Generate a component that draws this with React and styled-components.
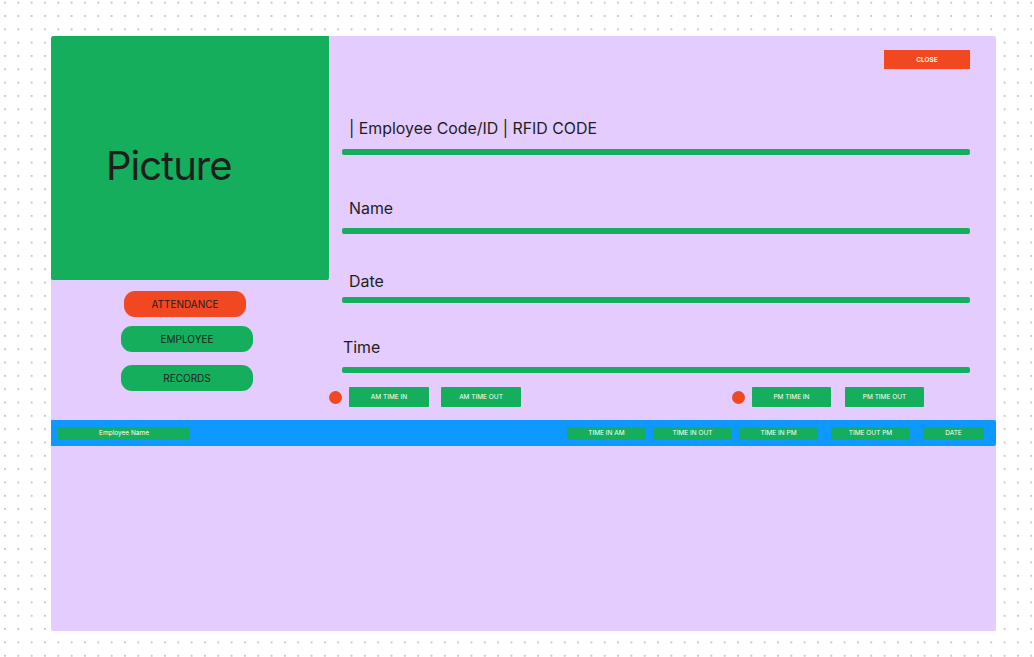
import styled, { createGlobalStyle } from "styled-components";

const GlobalStyle = createGlobalStyle`
    html, body {
        margin: 0;
        padding: 0;
    }
    body {
        width: 1034px;
        height: 657px;
        overflow: hidden;
        background-color: #ffffff;
        background-image: radial-gradient(circle, #c9c9c9 0.8px, transparent 1px);
        background-size: 13.33px 13.33px;
        background-position: -1.7px -4px;
        font-family: 'Inter', 'Liberation Sans', sans-serif;
    }
`

const GREEN = "#14ae5c";
const RED = "#f24822";
const BLUE = "#0d99ff";

const columns = [
    { label: "TIME IN AM", width: 79 },
    { label: "TIME IN OUT", width: 79 },
    { label: "TIME IN PM", width: 79, gapAfter: 13 },
    { label: "TIME OUT PM", width: 79, gapAfter: 13 },
    { label: "DATE", width: 61 },
];

export default function App() {
    return <>
        <GlobalStyle />
        <Panel>
            <TopSection>
                <LeftColumn>
                    <PictureBox>Picture</PictureBox>
                    <NavButton $color={RED} $width={122} $offset={73}>ATTENDANCE</NavButton>
                    <NavButton $width={132} $offset={70} $top={9}>EMPLOYEE</NavButton>
                    <NavButton $width={132} $offset={70} $top={13}>RECORDS</NavButton>
                </LeftColumn>

                <RightColumn>
                    <CloseRow>
                        <CloseButton>CLOSE</CloseButton>
                    </CloseRow>

                    <Field $top={50} $gap={10}>
                        <label>| Employee Code/ID | RFID CODE</label>
                        <Bar />
                    </Field>
                    <Field $top={44} $gap={9}>
                        <label>Name</label>
                        <Bar />
                    </Field>
                    <Field $top={38} $gap={5}>
                        <label>Date</label>
                        <Bar />
                    </Field>
                    <Field $top={35} $gap={9} $indent={1}>
                        <label>Time</label>
                        <Bar />
                    </Field>

                    <TimeRow>
                        <TimeGroup $gap={12}>
                            <Dot $space={7 - 12} />
                            <TimeButton $width={80}>AM TIME IN</TimeButton>
                            <TimeButton $width={80}>AM TIME OUT</TimeButton>
                        </TimeGroup>
                        <TimeGroup $gap={14} $left={211}>
                            <Dot $space={7 - 14} />
                            <TimeButton $width={79}>PM TIME IN</TimeButton>
                            <TimeButton $width={79}>PM TIME OUT</TimeButton>
                        </TimeGroup>
                    </TimeRow>
                </RightColumn>
            </TopSection>

            <TableHeader>
                <HeaderCell $width={132}>Employee Name</HeaderCell>
                <HeaderRight>
                    {columns.map((col) => (
                        <HeaderCell key={col.label} $width={col.width} $gapAfter={col.gapAfter}>{col.label}</HeaderCell>
                    ))}
                </HeaderRight>
            </TableHeader>
        </Panel>
    </>
}

const Panel = styled.div`
    margin: 36px 0 0 51px;
    width: 945px;
    height: 595px;
    background-color: #e4ccff;
    border-radius: 2px;
    display: flex;
    flex-direction: column;
    overflow: hidden;
`

const TopSection = styled.div`
    display: flex;
`

const LeftColumn = styled.div`
    width: 278px;
    display: flex;
    flex-direction: column;
`

const PictureBox = styled.div`
    height: 244px;
    background-color: ${GREEN};
    border-radius: 2px 0 2px 2px;
    display: flex;
    align-items: center;
    padding-left: 55px;
    padding-top: 14px;
    box-sizing: border-box;
    font-size: 40px;
    letter-spacing: -1px;
    color: #1e1e1e;
    margin-bottom: 11px;
`

const NavButton = styled.div`
    width: ${(p) => p.$width}px;
    height: 26px;
    margin-left: ${(p) => p.$offset}px;
    margin-top: ${(p) => p.$top || 0}px;
    background-color: ${(p) => p.$color || GREEN};
    border-radius: 11px;
    display: flex;
    align-items: center;
    justify-content: center;
    font-size: 10px;
    color: #1e1e1e;
`

const RightColumn = styled.div`
    flex: 1;
    display: flex;
    flex-direction: column;
`

const CloseRow = styled.div`
    display: flex;
    justify-content: flex-end;
    padding: 14px 26px 0 0;
`

const CloseButton = styled.div`
    width: 86px;
    height: 19px;
    background-color: ${RED};
    color: #ffffff;
    font-size: 6.5px;
    font-weight: 600;
    display: flex;
    align-items: center;
    justify-content: center;
`

const Field = styled.div`
    margin-top: ${(p) => p.$top}px;
    padding: 0 26px 0 13px;
    display: flex;
    flex-direction: column;
    gap: ${(p) => p.$gap}px;

    & > label {
        display: block;
        padding-left: ${(p) => (p.$indent !== undefined ? p.$indent : 7)}px;
        font-size: 15.9px;
        line-height: 20px;
        color: #1e1e1e;
    }
`

const Bar = styled.div`
    height: 6px;
    background-color: ${GREEN};
    border-radius: 2px;
`

const TimeRow = styled.div`
    display: flex;
    margin-top: 14px;
    margin-bottom: 13px;
`

const TimeGroup = styled.div`
    display: flex;
    align-items: center;
    gap: ${(p) => p.$gap}px;
    margin-left: ${(p) => p.$left || 0}px;
`

const Dot = styled.div`
    flex: none;
    width: 13px;
    height: 13px;
    border-radius: 50%;
    background-color: ${RED};
    margin-right: ${(p) => p.$space}px;
`

const TimeButton = styled.div`
    flex: none;
    width: ${(p) => p.$width}px;
    height: 20px;
    background-color: ${GREEN};
    border-radius: 1px;
    color: #ffffff;
    font-size: 6.5px;
    display: flex;
    align-items: center;
    justify-content: center;
`

const TableHeader = styled.div`
    height: 26px;
    background-color: ${BLUE};
    border-radius: 0 2px 2px 0;
    display: flex;
    align-items: center;
    justify-content: space-between;
    padding: 0 12px 0 7px;
`

const HeaderRight = styled.div`
    display: flex;
    gap: 7px;
`

const HeaderCell = styled.div`
    width: ${(p) => p.$width}px;
    height: 13px;
    margin-right: ${(p) => (p.$gapAfter ? p.$gapAfter - 7 : 0)}px;
    background-color: ${GREEN};
    border-radius: 1px;
    color: #ffffff;
    font-size: 6.5px;
    display: flex;
    align-items: center;
    justify-content: center;
`
